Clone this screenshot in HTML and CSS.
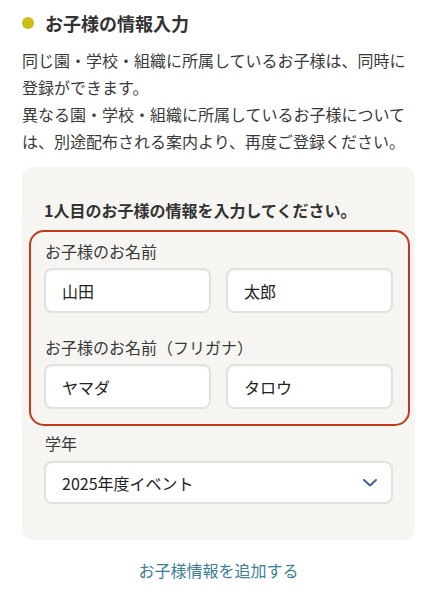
FILE: index.html
```html
<!DOCTYPE html>
<html lang="ja">
<head>
<meta charset="utf-8">
<title>お子様の情報入力</title>
<link rel="stylesheet" href="styles.css">
</head>
<body>
<main class="page">
  <h2 class="heading"><span class="dot"></span>お子様の情報入力</h2>
  <p class="intro">同じ園・学校・組織に所属しているお子様は、同時に登録ができます。<br>異なる園・学校・組織に所属しているお子様については、別途配布される案内より、再度ご登録ください。</p>
  <section class="card">
    <h3 class="card-title">1人目のお子様の情報を入力してください。</h3>
    <div class="highlight">
      <div class="field">
        <label class="label">お子様のお名前</label>
        <div class="pair">
          <input class="input" type="text" value="山田">
          <input class="input" type="text" value="太郎">
        </div>
      </div>
      <div class="field field-second">
        <label class="label">お子様のお名前（フリガナ）</label>
        <div class="pair">
          <input class="input" type="text" value="ヤマダ">
          <input class="input" type="text" value="タロウ">
        </div>
      </div>
    </div>
    <div class="field field-grade">
      <label class="label">学年</label>
      <div class="select">
        <span>2025年度イベント</span>
        <svg class="chevron" width="14" height="8" viewBox="0 0 14 8"><polyline points="1,1 7,6.5 13,1" fill="none" stroke="#3d6390" stroke-width="2" stroke-linecap="round" stroke-linejoin="round"/></svg>
      </div>
    </div>
  </section>
  <div class="add"><a class="add-link" href="#">お子様情報を追加する</a></div>
</main>
</body>
</html>
```
FILE: styles.css
```css
* { box-sizing: border-box; }
html, body {
  margin: 0;
  padding: 0;
  background: #ffffff;
}
body {
  font-family: "Noto Sans CJK JP", "Noto Sans", sans-serif;
  color: #333333;
  font-size: 16px;
}
.page {
  width: 437px;
  padding: 10px 22px 0 22px;
}
.heading {
  margin: 0;
  display: flex;
  align-items: center;
  font-size: 18px;
  line-height: 26px;
  font-weight: 700;
  color: #333333;
}
.dot {
  width: 12px;
  height: 12px;
  border-radius: 50%;
  background: #cdbf15;
  margin-right: 11px;
  flex: none;
}
.intro {
  margin: 11px 0 0 0;
  font-size: 16px;
  line-height: 27px;
  color: #3a3a3a;
}
.card {
  margin-top: 12px;
  background: #f6f5f1;
  border-radius: 10px;
  padding: 31px 22px 36px 22px;
}
.card-title {
  margin: 0;
  font-size: 16px;
  line-height: 24px;
  font-weight: 700;
  color: #333333;
}
.highlight {
  margin: 8px -17px 0 -15px;
  border: 2px solid #c23a1c;
  border-radius: 15px;
  padding: 7px 15px 15px 13px;
}
.field {
  display: flex;
  flex-direction: column;
}
.field-second {
  margin-top: 22px;
}
.field-grade {
  margin-top: 5px;
}
.label {
  font-size: 16px;
  line-height: 24px;
  color: #3a3a3a;
  margin-left: 1px;
}
.pair {
  margin-top: 5px;
  display: grid;
  grid-template-columns: 1fr 1fr;
  gap: 15px;
}
.input {
  width: 100%;
  height: 45px;
  border: 2px solid #e3e1dd;
  border-radius: 8px;
  background: #ffffff;
  padding: 0 16px;
  font-family: "Noto Sans CJK JP", "Noto Sans", sans-serif;
  font-size: 16px;
  color: #222222;
  box-shadow: inset 0 1px 2px rgba(0,0,0,0.04);
  outline: none;
}
.select {
  margin-top: 6px;
  height: 43px;
  border: 2px solid #e3e1dd;
  border-radius: 8px;
  background: #ffffff;
  padding: 0 14px 0 16px;
  display: flex;
  align-items: center;
  justify-content: space-between;
  font-size: 16px;
  color: #222222;
}
.chevron {
  display: block;
}
.add {
  margin-top: 18px;
  text-align: center;
  line-height: 24px;
}
.add-link {
  font-size: 16px;
  color: #3b7e99;
  text-decoration: none;
}
```
